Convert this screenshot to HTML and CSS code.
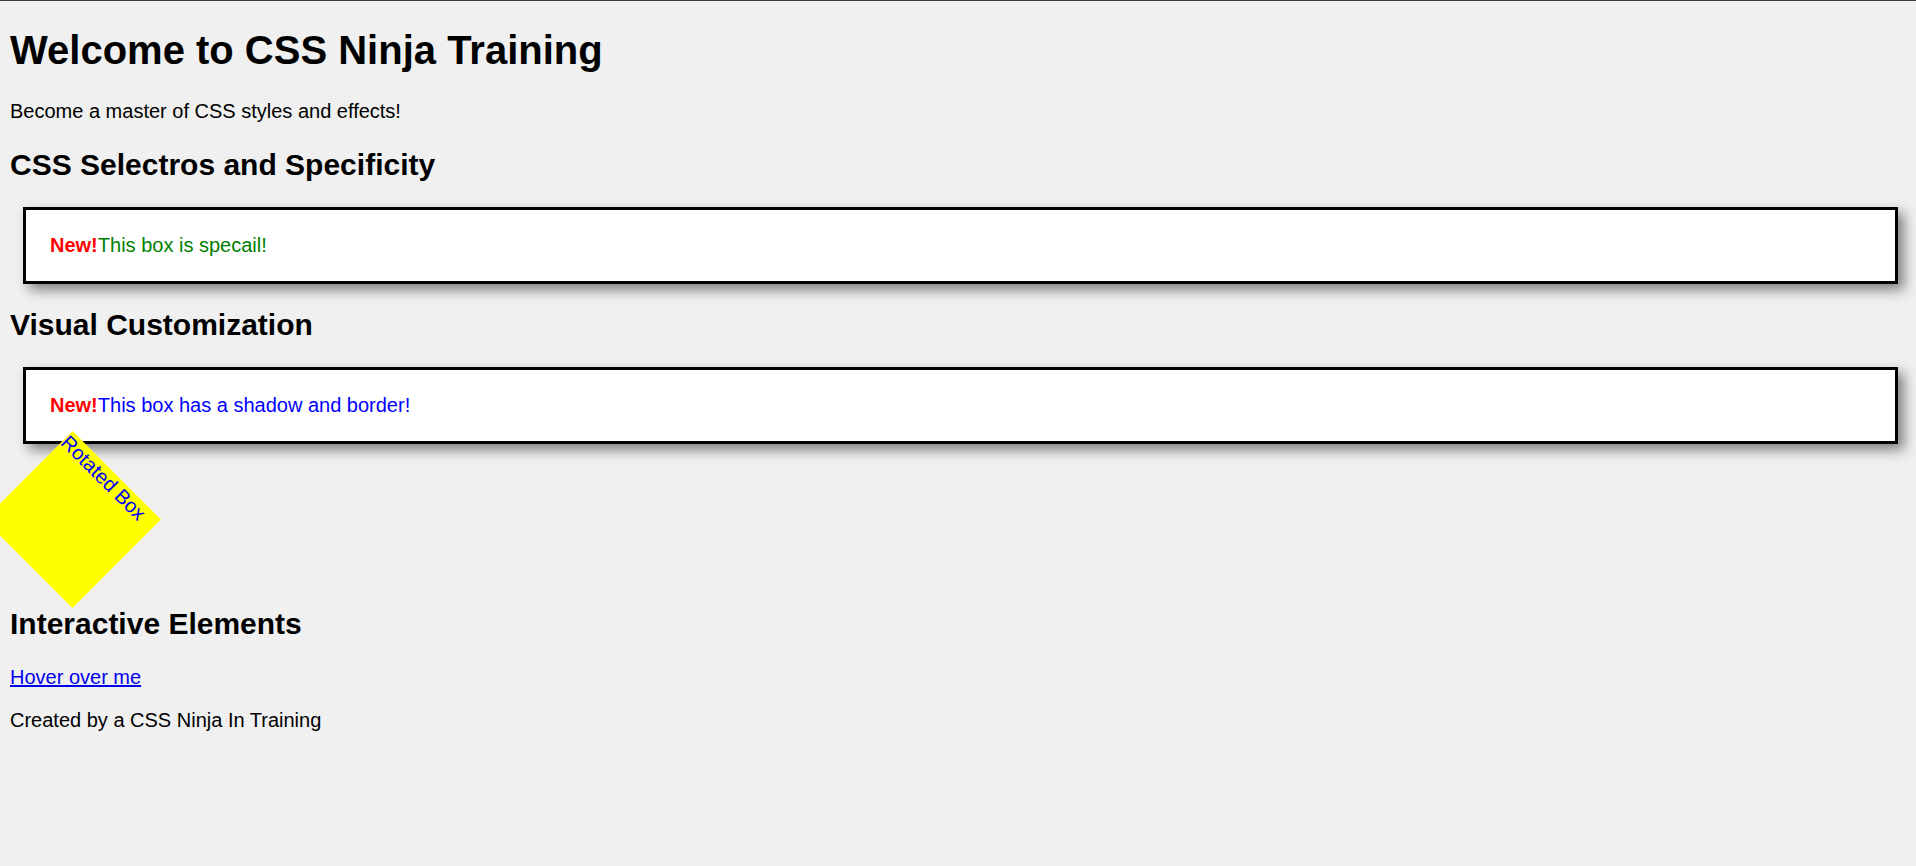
FILE: index.html
```html
<!DOCTYPE html>
<html lang="en">
<head>
<meta charset="utf-8">
<title>CSS Ninja Training</title>
<link rel="stylesheet" href="styles.css">
</head>
<body>
<h1 class="title">Welcome to CSS Ninja Training</h1>
<p class="text">Become a master of CSS styles and effects!</p>
<h2 class="section-title">CSS Selectros and Specificity</h2>
<div class="box special"><span class="badge">New!</span>This box is specail!</div>
<h2 class="section-title">Visual Customization</h2>
<div class="box shadowed"><span class="badge">New!</span>This box has a shadow and border!</div>
<div class="rotated">Rotated Box</div>
<h2 class="section-title">Interactive Elements</h2>
<p class="text"><a class="hover-link" href="#">Hover over me</a></p>
<p class="text">Created by a CSS Ninja In Training</p>
</body>
</html>
```

FILE: styles.css
```css
html {
  background: #f0f0f0;
}

body {
  margin: 0;
  padding: 0 10px 10px;
  font-family: "Liberation Sans", Arial, sans-serif;
  color: #000;
  background: #f0f0f0;
}

body::before {
  content: "";
  position: fixed;
  top: 0;
  left: 0;
  right: 0;
  height: 1px;
  background: #3c3c3c;
  z-index: 10;
}

.title {
  font-size: 40px;
  font-weight: bold;
  margin: 28px 0 26.8px;
}

.section-title {
  font-size: 30px;
  font-weight: bold;
  margin: 24.9px 0;
}

.text {
  font-size: 20px;
  margin: 20px 0;
}

.box {
  background: #fff;
  border: 3px solid #000;
  margin: 12px 8px 13px 13px;
  padding: 24px 24px;
  font-size: 20px;
  box-shadow: 6px 6px 12px #808080;
}

.special {
  color: #008000;
}

.shadowed {
  color: #0000ff;
}

.badge {
  color: #ff0000;
  font-weight: bold;
}

.rotated {
  width: 125px;
  height: 125px;
  background: #ffff00;
  color: #0000ff;
  font-size: 20px;
  transform: rotate(45deg);
  margin: 0;
}

.hover-link {
  color: #0000ee;
}
```
